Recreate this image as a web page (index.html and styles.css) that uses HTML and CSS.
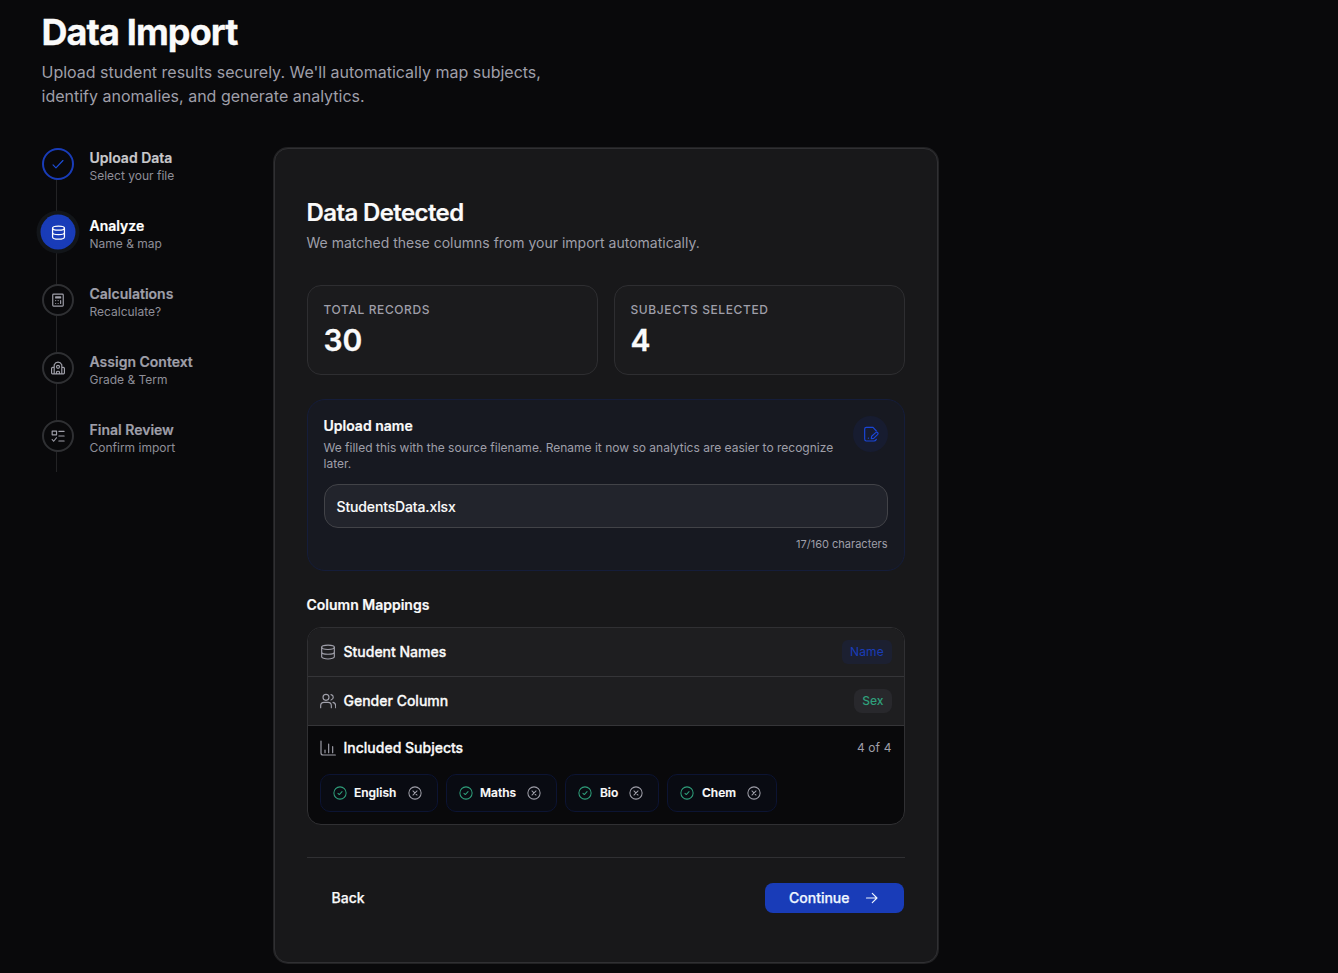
FILE: index.html
```
<!DOCTYPE html>
<html lang="en">
<head>
<meta charset="utf-8">
<title>Data Import</title>
<link rel="stylesheet" href="styles.css">
</head>
<body>
<svg class="sprite" aria-hidden="true">
  <symbol id="i-check" viewBox="0 0 24 24"><path d="M3.500 13.500L8.500 18.500L20.500 6"/></symbol>
  <symbol id="i-db" viewBox="0 0 24 24"><ellipse cx="12" cy="5" rx="9.500" ry="3.200"/><path d="M2.500 5v14C2.500 20.800 7 22.500 12 22.500s9.500-1.700 9.500-3.500V5M2.500 12c0 1.800 4.500 3.400 9.500 3.400s9.500-1.600 9.500-3.400"/></symbol>
  <symbol id="i-calc" viewBox="0 0 24 24"><rect x="3" y="2" width="18" height="20.500" rx="1.500"/><path d="M8 6.500h8.500v2H8zM8 13h.1M12.200 13h.1M16.500 13v5M8 18h.1M12.200 18h.1"/></symbol>
  <symbol id="i-school" viewBox="0 0 24 24"><path d="M5.500 22V6.500C7 3.500 9.500 2 12 2s5 1.500 6.500 4.500V22M2.500 22h19c.8 0 1.500-.5 1.500-1.500V13c0-1.500-1.500-2.500-4.500-2.500M2.500 22C1.700 22 1 21.500 1 20.500V13c0-1.500 1.500-2.500 4.500-2.500M9.500 22v-3c0-1 .7-1.500 2.500-1.500s2.500.5 2.500 1.500v3"/><circle cx="12" cy="10" r="2.600"/></symbol>
  <symbol id="i-list" viewBox="0 0 24 24"><path d="M2 3.500h7.500V10H2zM2 18l2.500 3L9.500 15M13.500 4h9M13.500 12h9M13.500 20.500h9"/></symbol>
  <symbol id="i-edit" viewBox="0 0 24 24"><path d="M20 7.500l-5-5.500H5C3.500 2 2.500 3 2.500 4.500v15C2.500 21.200 3.500 22.500 5 22.500h11.500c1.700 0 2.500-.8 3.500-2.500M8 18.200h.2"/><path d="M12.500 19l.5-3.700 6-5.300c1-1 2.200-1 3 0s.8 2-.2 3l-5.800 5.500z"/></symbol>
  <symbol id="i-users" viewBox="0 0 24 24"><circle cx="9" cy="6.500" r="4.500"/><path d="M1 22v-3c0-3 2-5 5-5h6c3 0 5 2 5 5v3M16.500 2.500c4.500 1 4.500 7 0 8M19.500 14c2.500.5 4 2.500 4 5v3"/></symbol>
  <symbol id="i-chart" viewBox="0 0 24 24"><path d="M1.500 1.500v18c0 2 .8 3 3 3H23M7.500 19v-4M13 19V6M19 19v-9"/></symbol>
  <symbol id="i-ok" viewBox="0 0 24 24"><circle cx="12" cy="12" r="10.500"/><path d="M8.500 12.500l2.300 2.200 4.700-5"/></symbol>
  <symbol id="i-x" viewBox="0 0 24 24"><circle cx="12" cy="12" r="10.500"/><path d="M8.500 8.500l7 7M15.500 8.500l-7 7"/></symbol>
  <symbol id="i-arrow" viewBox="0 0 24 24"><path d="M2.500 12h18M12.500 4l8 8-8 8"/></symbol>
</svg>
<main class="page">
  <header class="intro">
    <h1>Data Import</h1>
    <p>Upload student results securely. We'll automatically map subjects, identify anomalies, and generate analytics.</p>
  </header>
  <div class="layout">
    <ol class="steps">
      <li class="step done"><span class="dot"><svg><use href="#i-check"/></svg></span><div><b>Upload Data</b><small>Select your file</small></div></li>
      <li class="step active"><span class="dot"><svg><use href="#i-db"/></svg></span><div><b>Analyze</b><small>Name &amp; map</small></div></li>
      <li class="step"><span class="dot"><svg><use href="#i-calc"/></svg></span><div><b>Calculations</b><small>Recalculate?</small></div></li>
      <li class="step"><span class="dot"><svg><use href="#i-school"/></svg></span><div><b>Assign Context</b><small>Grade &amp; Term</small></div></li>
      <li class="step"><span class="dot"><svg><use href="#i-list"/></svg></span><div><b>Final Review</b><small>Confirm import</small></div></li>
    </ol>
    <section class="card">
      <h2>Data Detected</h2>
      <p class="lead">We matched these columns from your import automatically.</p>
      <div class="stats">
        <div class="stat"><span>Total Records</span><strong>30</strong></div>
        <div class="stat"><span>Subjects Selected</span><strong>4</strong></div>
      </div>
      <div class="upload">
        <div class="upload-head">
          <div><h3>Upload name</h3><p>We filled this with the source filename. Rename it now so analytics are easier to recognize later.</p></div>
          <span class="badge-icon"><svg><use href="#i-edit"/></svg></span>
        </div>
        <div class="field">StudentsData.xlsx</div>
        <p class="count">17/160 characters</p>
      </div>
      <h3 class="section-title">Column Mappings</h3>
      <div class="table">
        <div class="row"><svg><use href="#i-db"/></svg><span>Student Names</span><em class="tag blue">Name</em></div>
        <div class="row"><svg><use href="#i-users"/></svg><span>Gender Column</span><em class="tag green">Sex</em></div>
        <div class="subjects">
          <div class="subjects-head"><svg><use href="#i-chart"/></svg><span>Included Subjects</span><em>4 of 4</em></div>
          <div class="chips">
            <span class="chip"><svg class="ok"><use href="#i-ok"/></svg><b>English</b><svg class="x"><use href="#i-x"/></svg></span>
            <span class="chip"><svg class="ok"><use href="#i-ok"/></svg><b>Maths</b><svg class="x"><use href="#i-x"/></svg></span>
            <span class="chip"><svg class="ok"><use href="#i-ok"/></svg><b>Bio</b><svg class="x"><use href="#i-x"/></svg></span>
            <span class="chip"><svg class="ok"><use href="#i-ok"/></svg><b>Chem</b><svg class="x"><use href="#i-x"/></svg></span>
          </div>
        </div>
      </div>
      <footer class="actions">
        <button class="back">Back</button>
        <button class="next">Continue<svg><use href="#i-arrow"/></svg></button>
      </footer>
    </section>
  </div>
</main>
</body>
</html>
```

FILE: styles.css
```
* { box-sizing: border-box; margin: 0; padding: 0; }
html, body { height: 100%; }
body { background: #09090b; color: #fafafa; font-family: Inter, "Liberation Sans", sans-serif; font-size: 14px; line-height: 20px; overflow: hidden; }
.sprite { position: absolute; width: 0; height: 0; }
svg { width: 16px; height: 16px; fill: none; stroke: currentColor; stroke-width: 1.75; stroke-linecap: round; stroke-linejoin: round; flex: none; }
em { font-style: normal; }
button { font: inherit; color: inherit; border: 0; background: none; }

.page { padding: 12px 0 0 41.5px; }
.intro h1 { font-size: 36px; line-height: 40px; font-weight: 700; letter-spacing: -0.9px; -webkit-text-stroke: .3px; }
.intro p { width: 520px; margin-top: 8px; font-size: 16px; line-height: 24px; color: #9f9fa9; }
.layout { display: grid; grid-template-columns: 232px 664px; margin-top: 40px; align-items: start; }

.steps { list-style: none; background: linear-gradient(#232325, #232325) 14.500px 0 / 1px 100% no-repeat; height: 324px; }
.step { display: flex; gap: 15px; height: 68px; color: #9f9fa9; }
.dot { width: 32px; height: 32px; margin: 0 .5px; border: 2px solid #2f3033; border-radius: 50%; background: #09090b; display: grid; place-items: center; flex: none; }
.dot svg { width: 14px; height: 14px; stroke-width: 2; }
.step b, .step small { display: block; }
.step b { font-weight: 600; line-height: 20px; -webkit-text-stroke: .2px; }
.step small { font-size: 12px; line-height: 15px; color: #8e8e98; }
.step.done .dot { border-color: #193cb8; color: #1d4ed8; }
.step.done b { color: #c8c8cb; }
.step.active .dot { background: #193cb8; border-color: #193cb8; color: #fff; box-shadow: 0 0 0 1.500px #193cb8, 0 0 0 5.500px #121519; }
.step.active .dot svg { width: 15px; height: 15px; margin: -.5px; stroke-width: 2; }
.step.active b { color: #fff; }

.card { height: 815px; padding: 50px 32px 0; border: 1px solid #303033; border-radius: 14px; background: #18181a; box-shadow: 0 0 0 1px #222224; }
.card h2 { font-size: 24px; line-height: 28px; font-weight: 600; letter-spacing: -0.6px; -webkit-text-stroke: .2px; }
.lead { margin-top: 6px; color: #9f9fa9; }
.stats { display: grid; grid-template-columns: 1fr 1fr; gap: 16px; margin-top: 32px; }
.stat { height: 90px; padding: 16px; border: 1px solid #2e2e31; border-radius: 14px; background: #1b1b1d; }
.stat span { display: block; font-size: 12px; line-height: 16px; font-weight: 500; letter-spacing: .6px; text-transform: uppercase; color: #9f9fa9; }
.stat strong { display: block; margin-top: 4px; font-size: 30px; line-height: 36px; font-weight: 600; -webkit-text-stroke: .3px; }

.upload { height: 172px; margin-top: 24px; padding: 16px; border: 1px solid #151d3a; border-radius: 18px; background: #171921; }
.upload-head { display: flex; justify-content: space-between; }
.upload-head > div { width: 518px; }
h3 { font-size: 14px; line-height: 20px; font-weight: 600; -webkit-text-stroke: .2px; }
.upload-head p { margin-top: 4px; font-size: 12px; line-height: 16px; color: #9f9fa9; }
.badge-icon { width: 35px; height: 36px; margin-right: -.5px; border-radius: 50%; background: #171c30; color: #1a46d8; display: grid; place-items: center; }
.field { height: 44px; margin-top: 12px; padding: 0 12px; border: 1px solid #424348; border-radius: 14px; background: #22242c; line-height: 43px; font-weight: 500; letter-spacing: -.14px; -webkit-text-stroke: .1px; }
.count { margin-top: 8px; font-size: 11px; line-height: 17px; text-align: right; color: #9f9fa9; }

.section-title { margin: 24px 0 12px; }
.table { height: 198px; border: 1px solid #303033; border-radius: 14px; background: #09090b; overflow: hidden; }
.row { display: flex; align-items: center; gap: 8px; height: 49px; padding: 0 12px; border-bottom: 1px solid #353538; background: #1e1e20; font-weight: 500; }
.row > span, .subjects-head > span { -webkit-text-stroke: .3px; }
.row svg, .subjects-head svg { color: #9f9fa9; }
.tag { margin-left: auto; padding: 4px 8px; border-radius: 6px; font-size: 12px; line-height: 16px; }
.tag.blue { padding: 4px 7.5px; background: #1c2031; color: #193cb8; font-weight: 400; letter-spacing: .2px; }
.tag.green { background: #28282c; color: #2f9f7b; font-weight: 500; border-radius: 8px; }
.subjects { padding: 12px; }
.subjects-head { display: flex; align-items: center; gap: 8px; font-weight: 500; }
.subjects-head em { margin-left: auto; font-size: 12px; font-weight: 400; letter-spacing: .1px; color: #9f9fa9; }
.chips { display: flex; gap: 8px; margin-top: 16px; }
.chip { display: flex; align-items: center; height: 38px; padding: 0 15px 0 12px; border: 1px solid #0c1433; border-radius: 10px; background: #090b12; font-size: 12px; }
.chip b { margin: 0 11.200px 0 7.500px; font-weight: 600; -webkit-text-stroke: .15px; }
.chip svg { width: 14px; height: 14px; }
.ok { color: #2f9f7b; }
.x { color: #9f9fa9; }

.actions { display: flex; justify-content: space-between; align-items: center; margin-top: 32px; padding: 25px 1px 0 25px; border-top: 1px solid #303033; font-weight: 500; -webkit-text-stroke: .25px; }
.next { display: flex; align-items: center; justify-content: center; gap: 15.500px; width: 139px; height: 30px; border-radius: 8px; background: #193cb8; color: #eff6ff; }
.next svg { width: 14px; height: 14px; stroke-width: 2; }
```
